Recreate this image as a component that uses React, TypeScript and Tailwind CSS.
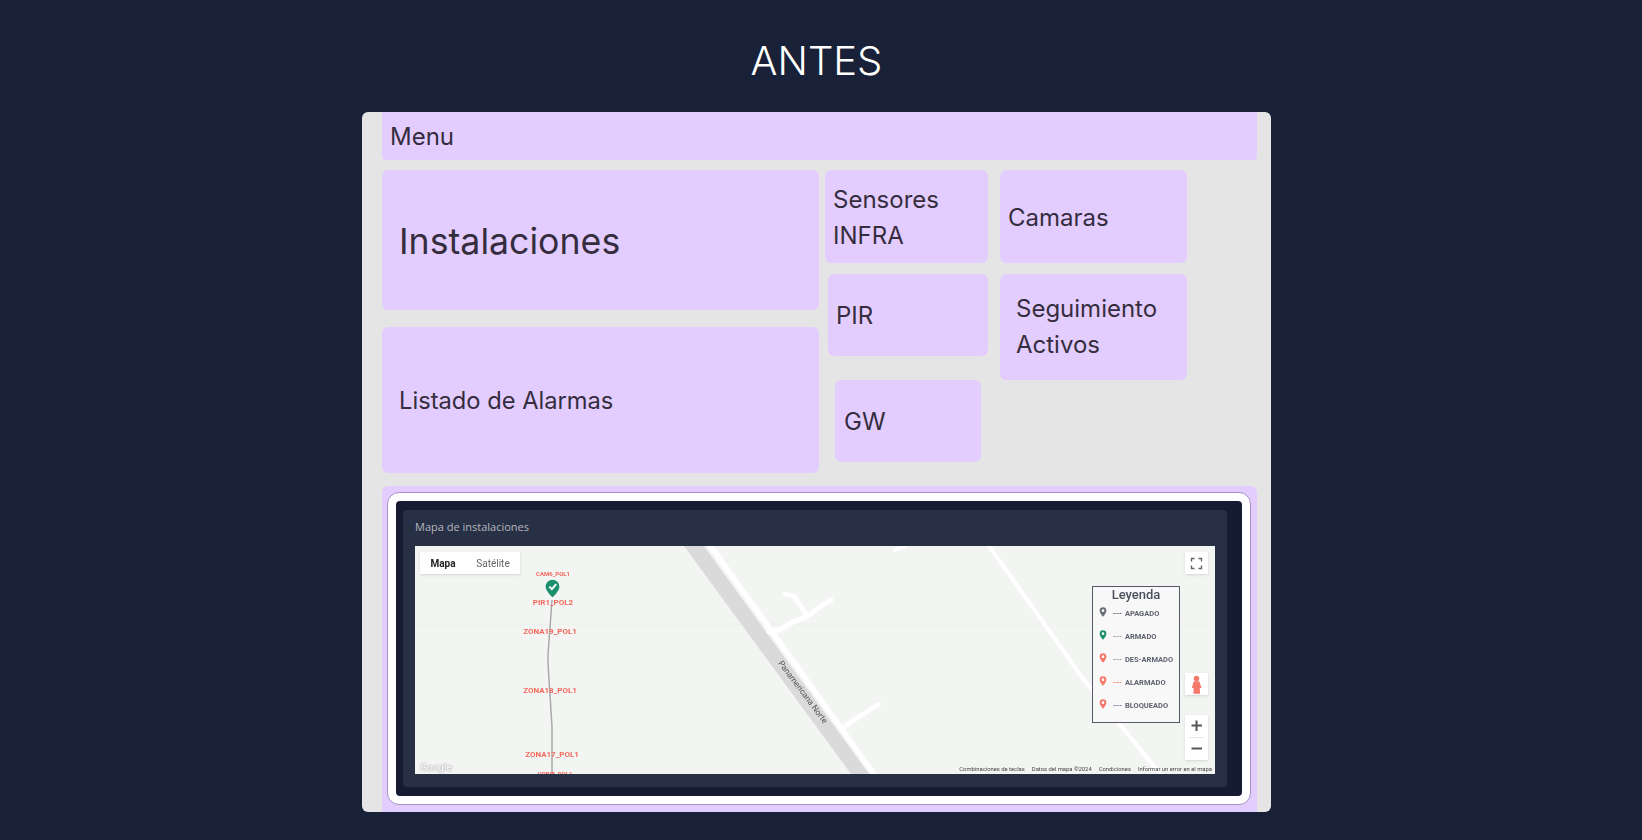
const labels = [
  { text: "CAM6_POL1", cls: "left-[138px] top-[27px] text-[6px]" },
  { text: "PIR1_POL2", cls: "left-[138px] top-[57px] text-[8px]" },
  { text: "ZONA19_POL1", cls: "left-[135px] top-[86px] text-[8px]" },
  { text: "ZONA18_POL1", cls: "left-[135px] top-[145px] text-[8px]" },
  { text: "ZONA17_POL1", cls: "left-[137px] top-[209px] text-[8px]" },
  { text: "ORBIB_POL1", cls: "left-[140px] top-[227px] text-[6px]" },
]

const legend = [
  { text: "APAGADO", pin: "#6b6f7a", dash: "text-[#5a5d6a]" },
  { text: "ARMADO", pin: "#1c8f6c", dash: "text-[#8b8e96]" },
  { text: "DES-ARMADO", pin: "#f4796b", dash: "text-[#8b8e96]" },
  { text: "ALARMADO", pin: "#f4796b", dash: "text-[#f4796b]" },
  { text: "BLOQUEADO", pin: "#f4796b", dash: "text-[#6b6f9a]" },
]

const Pin = ({ color, className }: { color: string; className: string }) => (
  <svg viewBox="0 0 24 30" className={className}>
    <path d="M12 1a10 10 0 0 0-10 10c0 7 10 18 10 18s10-11 10-18A10 10 0 0 0 12 1z" fill={color} />
    <circle cx="12" cy="11" r="4" fill="#fff" />
  </svg>
)

const Tile = ({ className, children }: { className: string; children: React.ReactNode }) => (
  <div className={`flex items-center rounded-md bg-[#e3cdfe] text-2xl leading-9 text-[#352d3e] ${className}`}>
    <div>{children}</div>
  </div>
)

const MapView = () => (
  <div className="relative h-[228px] overflow-hidden bg-[#f3f5f3] font-['Roboto',sans-serif] blur-[0.4px]">
    {/* calles */}
    <svg viewBox="0 0 800 228" className="absolute inset-0 h-full w-full">
      <path d="M0 78H800" stroke="#ecedec" strokeWidth="1" />
      <g transform="translate(-2 0)">
        <polygon points="271,0 291,0 456,228 438,228" fill="#dadada" />
        <polygon points="294,0 301,0 464,228 458,228" fill="#fff" />
        <g fill="none" stroke="#fff" strokeLinecap="round" strokeLinejoin="round">
          <path d="M356 86 L366 84 L378 77 L393 71 L404 63 L418 54" strokeWidth="5" />
          <path d="M393 68 L381 50 L372 48" strokeWidth="4.500" />
          <path d="M429 182 L466 158" strokeWidth="4.500" />
        </g>
      </g>
      <g fill="none" stroke="#fff" strokeLinecap="round" strokeLinejoin="round">
        <path d="M574 0 L669 134 L745 228" strokeWidth="4" />
        <path d="M480 4 L490 0" strokeWidth="4" />
      </g>
      <polyline points="137,54 133,109 133,117 137,181 137,228" fill="none" stroke="#a9a9a9" strokeWidth="1.500" />
    </svg>

    <span className="absolute left-[388px] top-[146px] -translate-x-1/2 -translate-y-1/2 rotate-[53deg] whitespace-nowrap text-[8.300px] text-[#555]">
      Panamericana Norte
    </span>

    {/* mapa / satelite */}
    <div className="absolute left-[5px] top-[6px] flex h-[22px] w-[100px] items-center bg-white text-[10px] shadow-sm">
      <span className="w-[46px] text-center font-bold text-[#222]">Mapa</span>
      <span className="flex-1 text-center text-[#666]">Satélite</span>
    </div>

    {labels.map((l) => (
      <span
        key={l.text}
        className={`absolute -translate-x-1/2 -translate-y-1/2 whitespace-nowrap font-bold text-[#f4695c] ${l.cls}`}
      >
        {l.text}
      </span>
    ))}

    <svg viewBox="0 0 24 30" className="absolute left-[130px] top-[32px] h-[21px] w-[15px]">
      <path d="M12 1a11 11 0 0 0-11 11c0 7 11 17 11 17s11-10 11-17A11 11 0 0 0 12 1z" fill="#1c8f6c" />
      <path d="M7 12l4 4 7-8" fill="none" stroke="#fff" strokeWidth="3" />
    </svg>

    {/* leyenda */}
    <div className="absolute left-[677px] top-[40px] h-[137px] w-[88px] border border-[#55586a] bg-[#f8f8f8]">
      <div className="text-center text-[13px] font-medium leading-[16px] text-[#4c4f5c]">Leyenda</div>
      <div className="mt-[2px] flex flex-col gap-[5px] pl-[6px]">
        {legend.map((item) => (
          <div key={item.text} className="flex h-[18px] items-center text-[7.500px] font-bold text-[#5f6270]">
            <Pin color={item.pin} className="mb-[4px] h-[10px] w-[8px]" />
            <span className={`ml-[6px] ${item.dash}`}>---</span>
            <span className="ml-[3px] whitespace-nowrap">{item.text}</span>
          </div>
        ))}
      </div>
    </div>

    {/* controles */}
    <div className="absolute left-[770px] top-[6px] flex h-[22px] w-[23px] items-center justify-center bg-white shadow-sm">
      <svg viewBox="0 0 13 13" className="h-[13px] w-[13px]">
        <path d="M1.500 4.500V1.500H4.500M8.500 1.500H11.500V4.500M11.500 8.500V11.500H8.500M4.500 11.500H1.500V8.500" fill="none" stroke="#666" strokeWidth="1.400" />
      </svg>
    </div>
    <div className="absolute left-[770px] top-[127px] flex h-[22px] w-[23px] items-center justify-center bg-white shadow-sm">
      <svg viewBox="0 0 12 20" className="h-[19px] w-[11px]">
        <circle cx="6" cy="3.500" r="3" fill="#f4796b" />
        <path d="M3 6.500h6l2.500 7-2 .5.500 6H2.500l.500-6-2-.5z" fill="#f4796b" />
      </svg>
    </div>
    <div className="absolute left-[770px] top-[169px] flex h-[45px] w-[23px] flex-col items-center bg-white shadow-sm">
      <svg viewBox="0 0 23 45" className="h-[45px] w-[23px]">
        <path d="M11.500 5.500V16M6.500 10.500H17" stroke="#555" strokeWidth="2" />
        <path d="M4 22.500H19" stroke="#e8e8e8" strokeWidth="1" />
        <path d="M6.500 33.500H17" stroke="#555" strokeWidth="2" />
      </svg>
    </div>

    <span className="absolute left-[5px] top-[214px] text-[10px] font-bold text-[#f4f5f4] [text-shadow:0_0_1.500px_#888]">
      Google
    </span>

    <div className="absolute bottom-0 right-[3px] flex h-[10px] items-center gap-[7px] whitespace-nowrap text-[5.850px] text-[#444]">
      <span>Combinaciones de teclas</span>
      <span>Datos del mapa ©2024</span>
      <span>Condiciones</span>
      <span>Informar un error en el mapa</span>
    </div>
  </div>
)

export default function App() {
  return (
    <div className="h-[840px] overflow-hidden bg-[#182137] font-['Inter',sans-serif]">
      <div className="ml-[362px] w-[909px]">
        <h1 className="pb-[29px] pt-[38px] text-center text-[40px] font-light leading-[45px] text-white">ANTES</h1>

        <div className="h-[700px] rounded-md bg-[#e5e5e5] pl-5 pr-[14px]">
          <div className="flex h-12 items-center rounded-b-sm bg-[#e3cdfe] pl-2 pt-[2px] text-2xl text-[#352d3e]">Menu</div>

          <div className="mt-[10px] flex h-[303px]">
            <div className="flex w-[437px] flex-col gap-[17px]">
              <Tile className="h-[140px] pl-[17px] pt-[1px] !text-[35.700px] !leading-10">Instalaciones</Tile>
              <Tile className="h-[146px] pl-[17px] pt-[2px] !text-[23.700px]">Listado de Alarmas</Tile>
            </div>

            <div className="ml-[6px] w-[163px]">
              <Tile className="h-[93px] pl-2 pt-[2px]">
                Sensores
                <br />
                INFRA
              </Tile>
              <Tile className="ml-[3px] mt-[11px] h-[82px] pl-2 pt-[2px]">PIR</Tile>
              <Tile className="ml-[10px] mt-[24px] h-[82px] w-[146px] pl-[9px] pt-[2px]">GW</Tile>
            </div>

            <div className="ml-3 w-[187px]">
              <Tile className="h-[93px] pl-2 pt-[2px]">Camaras</Tile>
              <Tile className="mt-[11px] h-[106px] pl-4">
                Seguimiento
                <br />
                Activos
              </Tile>
            </div>
          </div>

          <div className="mt-[13px] h-[326px] rounded-t-md bg-[#e3cdfe] pb-[7px] pl-[5px] pr-[6px] pt-[6px]">
            <div className="h-[313px] rounded-xl border border-[#a78fc4] bg-white pb-[8px] pl-2 pr-2 pt-2">
              <div className="h-full rounded-sm bg-[#141b33] pb-[9px] pl-[7px] pr-[15px] pt-[9px]">
                <div className="h-full rounded-sm bg-[#283046] pl-[12px] pr-[12px]">
                  <div className="flex h-[36px] items-center pb-[2px] font-['Open_Sans',sans-serif] text-[11px] text-[#b4b7bd]">
                    Mapa de instalaciones
                  </div>
                  <MapView />
                </div>
              </div>
            </div>
          </div>
        </div>
      </div>
    </div>
  )
}
